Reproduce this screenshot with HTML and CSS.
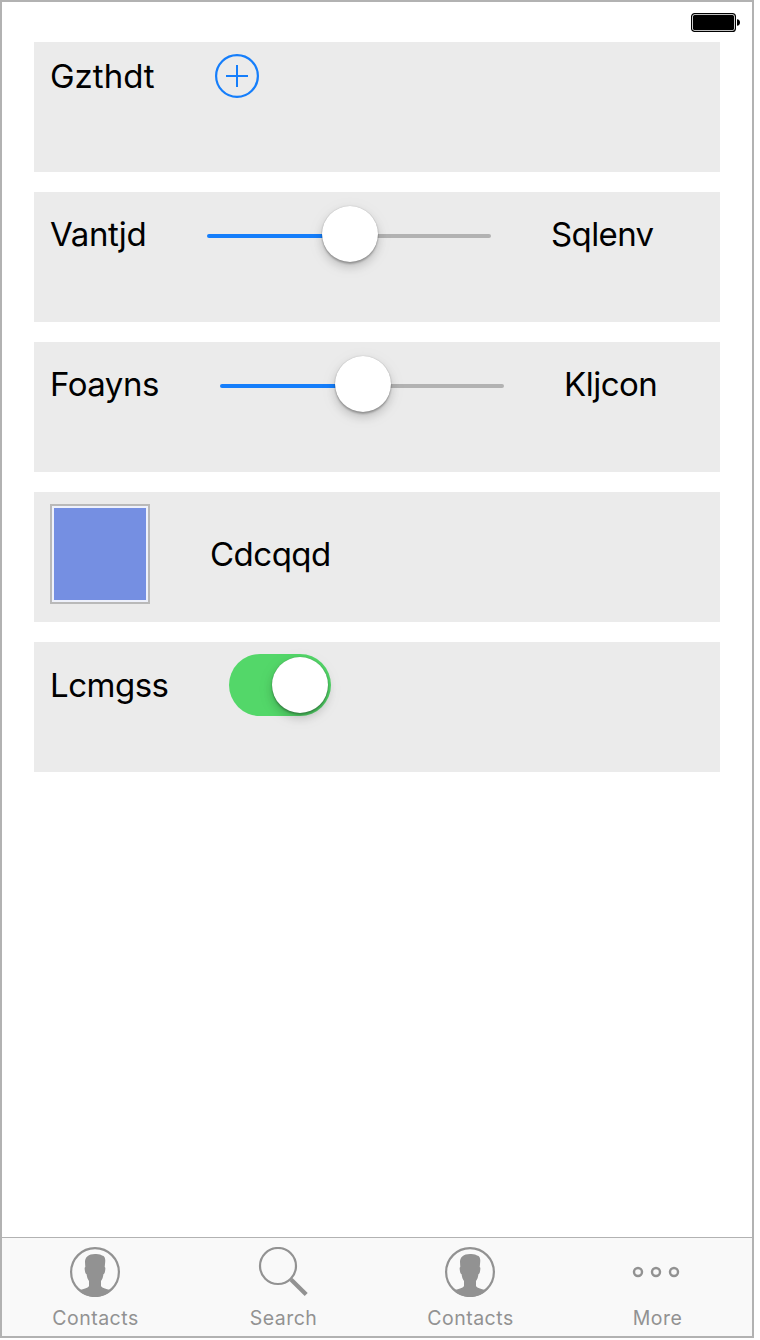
FILE: index.html
```html
<!DOCTYPE html>
<html lang="en">
<head>
<meta charset="utf-8">
<title>Controls</title>
<link rel="stylesheet" href="styles.css">
</head>
<body>
<div class="screen">
  <header class="status">
    <svg class="battery" width="50" height="20" viewBox="0 0 50 20">
      <rect x=".6" y=".6" width="43.8" height="17.8" rx="3" fill="#fff" stroke="#000" stroke-width="1.2"/>
      <rect x="2" y="2" width="41" height="15" rx="1.5"/>
      <path d="M46 6.2Q49 6.6 49 9.5T46 12.8Z"/>
    </svg>
  </header>
  <main class="cards">
    <section class="card">
      <span class="label gzthdt">Gzthdt</span>
      <svg class="add" width="44" height="44" viewBox="0 0 44 44" fill="none" stroke="#157efb" stroke-width="2">
        <circle cx="22" cy="22" r="20.900" stroke-width="2.200"/><path d="M11 22H33M22 11V33"/>
      </svg>
    </section>
    <section class="card">
      <span class="label vantjd">Vantjd</span>
      <div class="slider"><div class="track"></div><div class="knob"></div></div>
      <span class="label sqlenv">Sqlenv</span>
    </section>
    <section class="card">
      <span class="label foayns">Foayns</span>
      <div class="slider"><div class="track"></div><div class="knob"></div></div>
      <span class="label kljcon">Kljcon</span>
    </section>
    <section class="card">
      <div class="swatch"></div>
      <span class="label cdcqqd">Cdcqqd</span>
    </section>
    <section class="card">
      <span class="label lcmgss">Lcmgss</span>
      <div class="switch"><div class="knob"></div></div>
    </section>
  </main>
  <nav class="tabs">
    <div class="tab">
      <svg width="50" height="50" viewBox="0 0 50 50">
        <circle cx="25" cy="25" r="23.900" fill="none" stroke="#929292" stroke-width="2.200"/>
        <path fill="#929292" d="M25 7C29 6.700 31 8 32 8.500C35 9 35.500 12 35.200 15L34.700 20C35.700 20.500 35.400 22 35 24.500C34.600 26.500 34 27 33.500 27C33 30 32.500 32 31 34V39C32 41.500 37 42 41.500 43.200C37 47.500 31.500 50 25 50S13 47.500 8.500 43.200C13 42 18 41.500 19 39V34C17.500 32 17 30 16.500 27C16 27 15.400 26.500 15 24.500C14.600 22 14.300 20.500 15.300 20L15 15C15 10 18.500 7 25 7Z"/>
      </svg>
      <span class="name contacts">Contacts</span>
    </div>
    <div class="tab">
      <svg class="glass" width="50" height="50" viewBox="0 0 50 50" fill="none" stroke="#929292">
        <circle cx="20" cy="19" r="18" stroke-width="2.200"/><path d="M33 32.500L48.200 47.500" stroke-width="4.300"/>
      </svg>
      <span class="name search">Search</span>
    </div>
    <div class="tab">
      <svg width="50" height="50" viewBox="0 0 50 50">
        <circle cx="25" cy="25" r="23.900" fill="none" stroke="#929292" stroke-width="2.200"/>
        <path fill="#929292" d="M25 7C29 6.700 31 8 32 8.500C35 9 35.500 12 35.200 15L34.700 20C35.700 20.500 35.400 22 35 24.500C34.600 26.500 34 27 33.500 27C33 30 32.500 32 31 34V39C32 41.500 37 42 41.500 43.200C37 47.500 31.500 50 25 50S13 47.500 8.500 43.200C13 42 18 41.500 19 39V34C17.500 32 17 30 16.500 27C16 27 15.400 26.500 15 24.500C14.600 22 14.300 20.500 15.300 20L15 15C15 10 18.500 7 25 7Z"/>
      </svg>
      <span class="name contacts">Contacts</span>
    </div>
    <div class="tab">
      <svg class="dots" width="50" height="50" viewBox="0 0 50 50" fill="none" stroke="#929292" stroke-width="2.400">
        <circle cx="7" cy="25" r="4"/><circle cx="25" cy="25" r="4"/><circle cx="43" cy="25" r="4"/>
      </svg>
      <span class="name more">More</span>
    </div>
  </nav>
</div>
</body>
</html>
```
FILE: styles.css
```css
* { box-sizing: border-box; }
body { margin: 0; background: #fff; font-family: Inter, "Liberation Sans", sans-serif; }
.screen { width: 754px; height: 1338px; border: 2px solid #b2b2b2; display: flex; flex-direction: column; background: #fff; }
.status { height: 40px; padding: 11px 11px 0 0; display: flex; justify-content: flex-end; align-items: flex-start; }
.battery { display: block; }
.cards { flex: 1; padding: 0 32px; display: flex; flex-direction: column; gap: 20px; }
.card { height: 130px; padding: 12px 16px; display: flex; align-items: flex-start; gap: 60px; background: #ebebeb; }
.label { flex: none; height: 44px; line-height: 44px; font-size: 33px; white-space: nowrap; color: #000; }
.gzthdt { width: 105px; }
.vantjd { width: 97px; margin-top: 8px; letter-spacing: -.35px; }
.sqlenv { width: 104px; margin-top: 8px; letter-spacing: -.6px; }
.foayns { width: 110px; margin-top: 8px; letter-spacing: -.5px; }
.kljcon { width: 95px; margin-top: 8px; letter-spacing: -.5px; }
.cdcqqd { width: 122px; margin-top: 28px; letter-spacing: -.5px; }
.lcmgss { width: 119px; margin-top: 9px; letter-spacing: -.5px; }
.slider { flex: none; width: 284px; height: 60px; display: grid; place-items: center; }
.track { grid-area: 1 / 1; width: 284px; height: 4px; margin-top: 4px; border-radius: 2px; background: linear-gradient(90deg, #157efb 50%, #b2b2b2 50%); }
.knob { grid-area: 1 / 1; width: 56px; height: 56px; border-radius: 50%; background: #fff; z-index: 1; box-shadow: 0 0 1px rgba(0,0,0,.3), 0 2px 2px rgba(0,0,0,.24), 0 5px 10px rgba(0,0,0,.16), 0 4px 20px rgba(0,0,0,.05); }
.slider .knob { margin-left: 2px; }
.swatch { width: 100px; height: 100px; border: 2px solid #b9b9b9; padding: 2px; background: #758fe2 content-box; box-shadow: inset 0 0 0 2px #eef1fb; }
.switch { width: 102px; height: 62px; border-radius: 31px; padding: 3px; background: #53d769; display: flex; justify-content: flex-end; }
.tabs { height: 99px; border-top: 1px solid #b2b2b2; background: #f9f9f9; display: grid; grid-template-columns: 187px 188px 187px 188px; }
.tab { padding-top: 9px; display: flex; flex-direction: column; align-items: center; color: #929292; }
.tab svg { display: block; flex: none; margin-right: 1px; }
.tab .glass { margin-right: 0; }
.tab .dots { margin-right: 4px; }
.name { margin-top: 9px; font-size: 19.500px; line-height: 24px; letter-spacing: .5px; white-space: nowrap; }
.search { margin-left: 1px; }
.more { margin-right: 1px; }
```
